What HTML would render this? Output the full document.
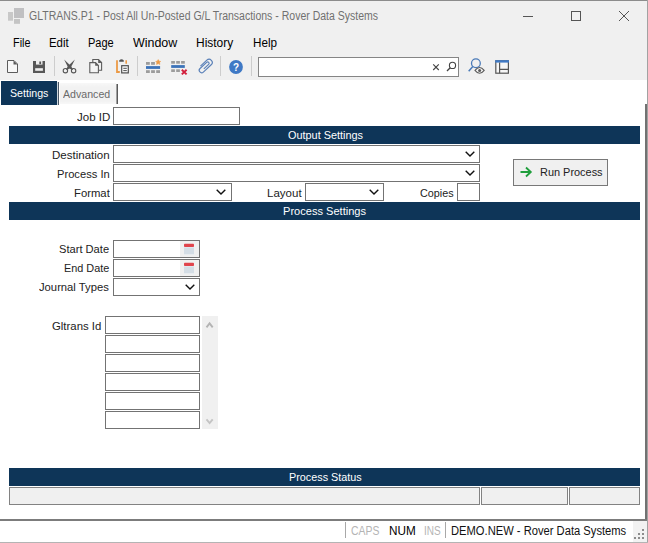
<!DOCTYPE html>
<html><head><meta charset="utf-8">
<style>
*{box-sizing:border-box;margin:0;padding:0}
html,body{width:648px;height:543px;overflow:hidden;background:#f0f0f0;font-family:"Liberation Sans",sans-serif;}
#w{position:relative;width:648px;height:543px;overflow:hidden;background:#f0f0f0}
.a{position:absolute}
.t{position:absolute;white-space:nowrap;line-height:1;transform-origin:0 0}
.bar{position:absolute;left:9px;width:631px;height:18px;background:#0e3558}
.f{position:absolute;background:#fff;border:1px solid #737373}
.sf{position:absolute;top:487px;height:18px;background:#f0f0f0;border:1px solid #828282}
.sep{position:absolute;top:56px;width:1px;height:20px;background:#cdcdcd}
</style></head><body><div id="w">
<!-- content white -->
<div class="a" style="left:0;top:80px;width:647px;height:440px;background:#fff"></div>
<!-- window borders -->
<div class="a" style="left:0;top:0;width:648px;height:1px;background:#8c8c8c"></div>
<div class="a" style="left:647px;top:0;width:1px;height:543px;background:#a2a2a2"></div>
<div class="a" style="left:645px;top:104px;width:2px;height:417px;background:#727272"></div>

<!-- title -->
<svg class="a" style="left:8px;top:8px" width="16" height="16" viewBox="0 0 16 16"><rect x="6" y="0" width="10" height="10" fill="#c0c0c2"/><rect x="0" y="4" width="5" height="8.700" fill="#c8c8c8"/><rect x="6" y="11" width="6" height="4.800" fill="#c4c4c4"/></svg>
<svg class="a" style="left:520px;top:8px" width="120" height="16" viewBox="0 0 120 16"><path d="M3 8.500H13" stroke="#555" fill="none"/><rect x="51.500" y="3.500" width="9" height="9" stroke="#555" fill="none"/><path d="M99 3L109 13M109 3L99 13" stroke="#555" fill="none"/></svg>

<!-- toolbar -->
<div class="sep" style="left:54px"></div>
<div class="sep" style="left:137px"></div>
<div class="sep" style="left:220px"></div>
<div class="sep" style="left:251px"></div>
<div class="a" style="left:258px;top:57px;width:201px;height:20px;background:#fff;border:1px solid #858585"></div>


<svg class="a" style="left:0;top:54px" width="648" height="26" viewBox="0 54 648 26">
<!-- new -->
<path d="M7.500 60.500H14L17.500 64V72.500H7.500Z" fill="#f7f7f7" stroke="#5c5c5c" stroke-width="1"/>
<path d="M13.500 60.500V64.500H17.500Z" fill="#5c5c5c"/>
<!-- save -->
<path d="M33 61H45V73H33Z" fill="#585858"/>
<rect x="36" y="61" width="6.500" height="3.600" fill="#f0f0f0"/>
<rect x="39.300" y="61.500" width="1.800" height="2.600" fill="#585858"/>
<rect x="35.200" y="68.200" width="7.700" height="2.600" fill="#f0f0f0"/>
<!-- scissors -->
<path d="M64.100 59.600L70.900 66L73 69.200L72 69.900L68.300 67.800Z" fill="#555"/>
<path d="M74.900 59.600L68.100 66L66 69.200L67 69.900L70.700 67.800Z" fill="#555"/>
<circle cx="65.400" cy="70.700" r="2.200" fill="none" stroke="#555" stroke-width="1.100"/>
<circle cx="73.600" cy="70.700" r="2.200" fill="none" stroke="#555" stroke-width="1.100"/>
<!-- copy -->
<path d="M92.800 62V59.500H98.500L101.600 62.600V70.200H99" fill="none" stroke="#5c5c5c" stroke-width="1.100"/>
<path d="M98.200 59.500V63H101.600Z" fill="#5c5c5c"/>
<path d="M89.800 62.600H95.500L98.400 65.500V72.800H89.800Z" fill="#f4f4f4" stroke="#5c5c5c" stroke-width="1.100"/>
<path d="M95.200 62.600V65.800H98.400Z" fill="#5c5c5c"/>
<!-- paste -->
<path d="M117 60.200V72H119.800" fill="none" stroke="#ec9a45" stroke-width="1.800"/>
<path d="M126.200 60.200V63.800" fill="none" stroke="#ec9a45" stroke-width="1.600"/>
<path d="M119.200 61.800V60.600Q121.500 57.800 123.800 60.600V61.800Z" fill="#555"/>
<rect x="121.700" y="65.700" width="6.600" height="7.200" fill="#fafafa" stroke="#505050" stroke-width="1.200"/>
<path d="M123.300 68.300H126.800M123.300 70.600H126.800" stroke="#505050" stroke-width="1"/>
<!-- insert row -->
<g fill="#9c9c9c"><rect x="146" y="62" width="3.800" height="2.800"/><rect x="151.100" y="62" width="3.800" height="2.800"/>
<rect x="146" y="70.200" width="3.800" height="2.800"/><rect x="151.100" y="70.200" width="3.800" height="2.800"/><rect x="156.200" y="70.200" width="3.800" height="2.800"/></g>
<rect x="146" y="66.100" width="14.100" height="2.800" fill="#3c73b9"/>
<path d="M158.200 59.600L159 61.200L160.600 61.400L159.500 62.700L159.800 64.400L158.200 63.600L156.600 64.400L156.900 62.700L155.800 61.400L157.400 61.200Z" fill="#ec9a45" stroke="#ec9a45" stroke-width="0.600"/>
<!-- delete row -->
<g fill="#9c9c9c"><rect x="171.200" y="61" width="3.700" height="2.700"/><rect x="176.200" y="61" width="3.700" height="2.700"/><rect x="181.100" y="61" width="3.700" height="2.700"/>
<rect x="171.200" y="69.300" width="3.700" height="2.700"/><rect x="176.200" y="69.300" width="3.700" height="2.700"/></g>
<rect x="171.200" y="65.100" width="13.600" height="2.800" fill="#3c73b9"/>
<path d="M181.800 69.800L186.600 74.400M186.600 69.800L181.800 74.400" stroke="#d21f3c" stroke-width="1.900"/>
<!-- paperclip -->
<g transform="translate(205.200 66) rotate(-43)" fill="none" stroke="#5a80b8" stroke-width="1.150">
<path d="M-3.500 -3.200H5.200A3.200 3.200 0 0 1 5.200 3.200H-5.500A2.450 2.450 0 0 1 -5.500 -1.700H3.600A1.450 1.450 0 0 1 3.600 1.200H-3"/>
</g>
<!-- help -->
<circle cx="236" cy="67" r="6.900" fill="#3f79c5"/>
<text x="236" y="70.600" text-anchor="middle" font-family="Liberation Sans" font-weight="bold" font-size="10" fill="#fff">?</text>
<!-- search box icons -->
<path d="M433.200 64.400L438.800 70M438.800 64.400L433.200 70" stroke="#444" stroke-width="1.100"/>
<circle cx="452.500" cy="65.400" r="3.100" fill="none" stroke="#444" stroke-width="1.100"/>
<path d="M450.200 67.700L447 71" stroke="#444" stroke-width="1.300"/>
<!-- find/eye -->
<circle cx="475.900" cy="63.300" r="4.400" fill="none" stroke="#4a7ab8" stroke-width="1.300"/>
<path d="M472.800 66.600L468.700 71.300" stroke="#4a7ab8" stroke-width="1.500"/>
<path d="M475 70.400Q479.600 64.600 484.200 70.400Q479.600 76.200 475 70.400Z" fill="#f4f4f4" stroke="#5a5a5a" stroke-width="1.100"/>
<circle cx="479.600" cy="70.400" r="1.500" fill="#5a5a5a"/>
<!-- layout -->
<rect x="495.800" y="60.800" width="12.600" height="12.400" fill="#f6f6f6" stroke="#555" stroke-width="1.200"/>
<rect x="495.200" y="60.200" width="13.800" height="2.400" fill="#3f79c5"/>
<path d="M499.600 62.600V73.200M499.600 69.400H508.400" stroke="#555" stroke-width="1.200" fill="none"/>
</svg>

<!-- tabs -->
<div class="a" style="left:1px;top:81px;width:56px;height:24px;background:#0e3558"></div>
<div class="a" style="left:57px;top:82px;width:1px;height:23px;background:#cfd8e0"></div>
<div class="a" style="left:58px;top:82px;width:1px;height:23px;background:#4a5866"></div>
<div class="a" style="left:60px;top:83px;width:56px;height:21px;background:linear-gradient(#f8f8f8,#f2f2f2 20%,#f2f2f2 85%,#f8f8f8)"></div>
<div class="a" style="left:116px;top:84px;width:1px;height:20px;background:#a0a0a0"></div>
<div class="a" style="left:117px;top:84px;width:1px;height:20px;background:#5a5a5a"></div>

<div class="bar" style="top:126px"></div>
<div class="bar" style="top:202px"></div>
<div class="bar" style="top:468px"></div>

<!-- run button -->
<div class="a" style="left:513px;top:159px;width:95px;height:27px;background:#f0f0f0;border:1px solid #787878"></div>
<svg class="a" style="left:519px;top:166px" width="14" height="12" viewBox="0 0 14 12"><path d="M1.500 6H11.500M7 1.500L11.800 6L7 10.500" fill="none" stroke="#1f9e3c" stroke-width="1.800"/></svg>

<div class="f" style="left:113px;top:107px;width:127px;height:18px"></div>
<div class="f" style="left:113px;top:145px;width:367px;height:18px"></div>
<svg class="a" style="left:463.5px;top:150.4px" width="12" height="8" viewBox="0 0 12 8"><path d="M1.700 1.800L6 6.100L10.300 1.800" fill="none" stroke="#111" stroke-width="1.4"/></svg>
<div class="f" style="left:113px;top:164px;width:367px;height:18px"></div>
<svg class="a" style="left:463.5px;top:169.4px" width="12" height="8" viewBox="0 0 12 8"><path d="M1.700 1.800L6 6.100L10.300 1.800" fill="none" stroke="#111" stroke-width="1.4"/></svg>
<div class="f" style="left:113px;top:183px;width:119px;height:18px"></div>
<svg class="a" style="left:215.2px;top:188.4px" width="12" height="8" viewBox="0 0 12 8"><path d="M1.700 1.800L6 6.100L10.300 1.800" fill="none" stroke="#111" stroke-width="1.4"/></svg>
<div class="f" style="left:305px;top:183px;width:79px;height:18px"></div>
<svg class="a" style="left:368.2px;top:188.4px" width="12" height="8" viewBox="0 0 12 8"><path d="M1.700 1.800L6 6.100L10.300 1.800" fill="none" stroke="#111" stroke-width="1.4"/></svg>
<div class="f" style="left:457px;top:183px;width:23px;height:18px"></div>
<div class="f" style="left:113px;top:240px;width:87px;height:18px"></div>
<div class="a" style="left:180px;top:241px;width:19px;height:16px;background:#f0f0f0"></div><svg class="a" style="left:183px;top:243px" width="12" height="12" viewBox="0 0 12 12"><rect x="1" y="0.700" width="10" height="3.300" rx="0.800" fill="#e0444c"/><rect x="1" y="4" width="10" height="7.500" fill="#dfe7ee"/><rect x="1" y="5.500" width="10" height="1" fill="#c9d3dc"/><rect x="1" y="7.500" width="10" height="1" fill="#c9d3dc"/><rect x="1" y="9.500" width="10" height="1" fill="#c9d3dc"/></svg>
<div class="f" style="left:113px;top:259px;width:87px;height:18px"></div>
<div class="a" style="left:180px;top:260px;width:19px;height:16px;background:#f0f0f0"></div><svg class="a" style="left:183px;top:262px" width="12" height="12" viewBox="0 0 12 12"><rect x="1" y="0.700" width="10" height="3.300" rx="0.800" fill="#e0444c"/><rect x="1" y="4" width="10" height="7.500" fill="#dfe7ee"/><rect x="1" y="5.500" width="10" height="1" fill="#c9d3dc"/><rect x="1" y="7.500" width="10" height="1" fill="#c9d3dc"/><rect x="1" y="9.500" width="10" height="1" fill="#c9d3dc"/></svg>
<div class="f" style="left:113px;top:278px;width:87px;height:18px"></div>
<svg class="a" style="left:183.6px;top:283.4px" width="12" height="8" viewBox="0 0 12 8"><path d="M1.700 1.800L6 6.100L10.300 1.800" fill="none" stroke="#111" stroke-width="1.4"/></svg>
<div class="f" style="left:105px;top:316px;width:95px;height:18px"></div>
<div class="f" style="left:105px;top:335px;width:95px;height:18px"></div>
<div class="f" style="left:105px;top:354px;width:95px;height:18px"></div>
<div class="f" style="left:105px;top:373px;width:95px;height:18px"></div>
<div class="f" style="left:105px;top:392px;width:95px;height:18px"></div>
<div class="f" style="left:105px;top:411px;width:95px;height:18px"></div>
<div class="a" style="left:202px;top:316px;width:16px;height:113px;background:#f0f0f0"></div>
<svg class="a" style="left:203px;top:319px" width="14" height="12" viewBox="203 319 14 12"><path d="M206.500 327.300L209.600 323.400L212.700 327.300" fill="none" stroke="#b4b4b4" stroke-width="1.900"/></svg>
<svg class="a" style="left:203px;top:415px" width="14" height="12" viewBox="203 415 14 12"><path d="M206.500 419.300L209.600 423L212.700 419.300" fill="none" stroke="#c4c4c4" stroke-width="1.900"/></svg>

<div class="sf" style="left:9px;width:471px"></div>
<div class="sf" style="left:481px;width:87px"></div>
<div class="sf" style="left:569px;width:71px"></div>

<!-- status bar -->
<div class="a" style="left:0;top:519px;width:647px;height:2px;background:#7c7c7c"></div>
<div class="a" style="left:0;top:521px;width:647px;height:21px;background:#fff"></div>
<div class="a" style="left:0;top:542px;width:648px;height:1px;background:#b4b4b4"></div>
<div class="a" style="left:633px;top:521px;width:14px;height:21px;background:#f2f2f2"></div>
<div class="a" style="left:345px;top:522px;width:1px;height:16px;background:#a8a8a8"></div>
<div class="a" style="left:445px;top:522px;width:1px;height:16px;background:#a8a8a8"></div>
<svg class="a" style="left:633px;top:528px" width="12" height="12" viewBox="0 0 12 12" fill="#8c8c8c"><rect x="9" y="1" width="2" height="2"/><rect x="5" y="5" width="2" height="2"/><rect x="9" y="5" width="2" height="2"/><rect x="1" y="9" width="2" height="2"/><rect x="5" y="9" width="2" height="2"/><rect x="9" y="9" width="2" height="2"/></svg>

<span class="t" style="left:29.3px;top:10.1px;font-size:12px;color:#707070;transform:scaleX(0.8751)">GLTRANS.P1 - Post All Un-Posted G/L Transactions - Rover Data Systems</span>
<span class="t" style="left:12.5px;top:36.5px;font-size:12px;color:#000;transform:scaleX(0.9047)">File</span>
<span class="t" style="left:49.3px;top:36.5px;font-size:12px;color:#000;transform:scaleX(0.9523)">Edit</span>
<span class="t" style="left:88.3px;top:36.5px;font-size:12px;color:#000;transform:scaleX(0.9168)">Page</span>
<span class="t" style="left:133.0px;top:36.5px;font-size:12px;color:#000;transform:scaleX(1.0378)">Window</span>
<span class="t" style="left:196.3px;top:36.5px;font-size:12px;color:#000;transform:scaleX(0.9962)">History</span>
<span class="t" style="left:253.3px;top:36.5px;font-size:12px;color:#000;transform:scaleX(0.9722)">Help</span>
<span class="t" style="left:9.6px;top:87.7px;font-size:11px;color:#fff;transform:scaleX(0.9660)">Settings</span>
<span class="t" style="left:62.9px;top:89.3px;font-size:11px;color:#6a6a6a;transform:scaleX(0.9645)">Advanced</span>
<span class="t" style="left:77.0px;top:111.7px;font-size:11px;color:#222;transform:scaleX(1.0473)">Job ID</span>
<span class="t" style="left:52.1px;top:149.5px;font-size:11px;color:#222;transform:scaleX(1.0482)">Destination</span>
<span class="t" style="left:57.3px;top:168.5px;font-size:11px;color:#222;transform:scaleX(1.0141)">Process In</span>
<span class="t" style="left:74.2px;top:187.5px;font-size:11px;color:#222;transform:scaleX(1.0274)">Format</span>
<span class="t" style="left:267.3px;top:187.5px;font-size:11px;color:#222;transform:scaleX(1.0475)">Layout</span>
<span class="t" style="left:419.7px;top:187.5px;font-size:11px;color:#222;transform:scaleX(0.9810)">Copies</span>
<span class="t" style="left:539.7px;top:167.2px;font-size:11px;color:#222;transform:scaleX(0.9939)">Run Process</span>
<span class="t" style="left:58.7px;top:244.3px;font-size:11px;color:#222;transform:scaleX(1.0115)">Start Date</span>
<span class="t" style="left:63.5px;top:263.3px;font-size:11px;color:#222;transform:scaleX(0.9875)">End Date</span>
<span class="t" style="left:39.2px;top:282.3px;font-size:11px;color:#222;transform:scaleX(1.0220)">Journal Types</span>
<span class="t" style="left:51.7px;top:320.7px;font-size:11px;color:#222;transform:scaleX(1.0338)">Gltrans Id</span>
<span class="t" style="left:287.5px;top:129.5px;font-size:11px;color:#fff;transform:scaleX(0.9891)">Output Settings</span>
<span class="t" style="left:283.3px;top:205.5px;font-size:11px;color:#fff;transform:scaleX(1.0055)">Process Settings</span>
<span class="t" style="left:288.8px;top:471.5px;font-size:11px;color:#fff;transform:scaleX(0.9826)">Process Status</span>
<span class="t" style="left:350.6px;top:524.6px;font-size:12px;color:#b4b4b4;transform:scaleX(0.8688)">CAPS</span>
<span class="t" style="left:388.6px;top:524.6px;font-size:12px;color:#000;transform:scaleX(0.9770)">NUM</span>
<span class="t" style="left:424.0px;top:524.6px;font-size:12px;color:#b4b4b4;transform:scaleX(0.8343)">INS</span>
<span class="t" style="left:451.1px;top:524.6px;font-size:12px;color:#111;transform:scaleX(0.9318)">DEMO.NEW - Rover Data Systems</span>
</div></body></html>
